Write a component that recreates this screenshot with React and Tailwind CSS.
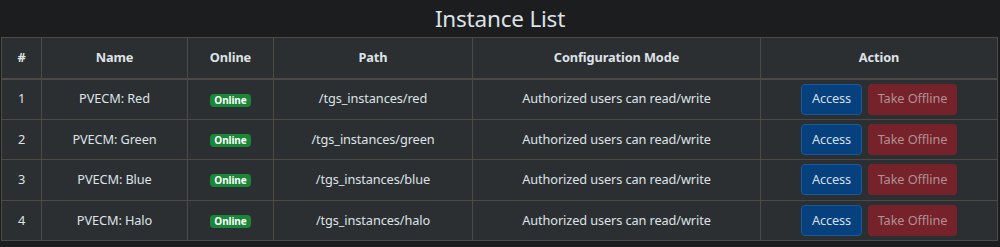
import React from 'react';

const instances = [
  { id: 1, name: 'PVECM: Red', path: '/tgs_instances/red' },
  { id: 2, name: 'PVECM: Green', path: '/tgs_instances/green' },
  { id: 3, name: 'PVECM: Blue', path: '/tgs_instances/blue' },
  { id: 4, name: 'PVECM: Halo', path: '/tgs_instances/halo' },
];

const App = () => {
  return (
    <div className="w-[1000px] h-[247px] bg-[#1c1d1f] text-[#dee2e6] font-['Noto_Sans',sans-serif] overflow-hidden">
      <h1 className="text-center text-[22.5px] leading-[37px] font-normal tracking-[-0.2px] text-[#dee2e6]">Instance List</h1>
      <div className="px-px">
        <table className="w-[997px] border-collapse bg-[#2b2f32] text-[12.75px] tracking-[-0.1px]">
          <thead>
            <tr className="h-[41px] border-b-2 border-[#4d4a45]">
              <th className="w-[40px] border border-[#4d4a45] font-bold">#</th>
              <th className="w-[146px] border border-[#4d4a45] font-bold">Name</th>
              <th className="w-[86px] border border-[#4d4a45] font-bold">Online</th>
              <th className="w-[199px] border border-[#4d4a45] font-bold">Path</th>
              <th className="w-[288px] border border-[#4d4a45] font-bold">Configuration Mode</th>
              <th className="border border-[#4d4a45] font-bold">Action</th>
            </tr>
          </thead>
          <tbody>
            {instances.map(inst => (
              <tr key={inst.id} className="h-[40.5px]">
                <td className="border border-[#4d4a45] text-center">{inst.id}</td>
                <td className="border border-[#4d4a45] text-center">{inst.name}</td>
                <td className="border border-[#4d4a45] text-center">
                  <span className="inline-block px-[4px] rounded-[4px] bg-[#198737] text-white text-[10px] font-bold leading-[13px] align-middle">Online</span>
                </td>
                <td className="border border-[#4d4a45] text-center">{inst.path}</td>
                <td className="border border-[#4d4a45] text-center">Authorized users can read/write</td>
                <td className="border border-[#4d4a45] text-center">
                  <div className="flex justify-center gap-[6px]">
                    <button className="w-[61px] h-[31px] rounded-[4px] bg-[#06417d] border border-[#1459a1] text-[#d6dee9] text-[12.75px]">Access</button>
                    <button className="w-[89px] h-[31px] rounded-[4px] bg-[#75222a] text-[#b09094] text-[12.75px]">Take Offline</button>
                  </div>
                </td>
              </tr>
            ))}
          </tbody>
        </table>
      </div>
    </div>
  );
};

export default App;
